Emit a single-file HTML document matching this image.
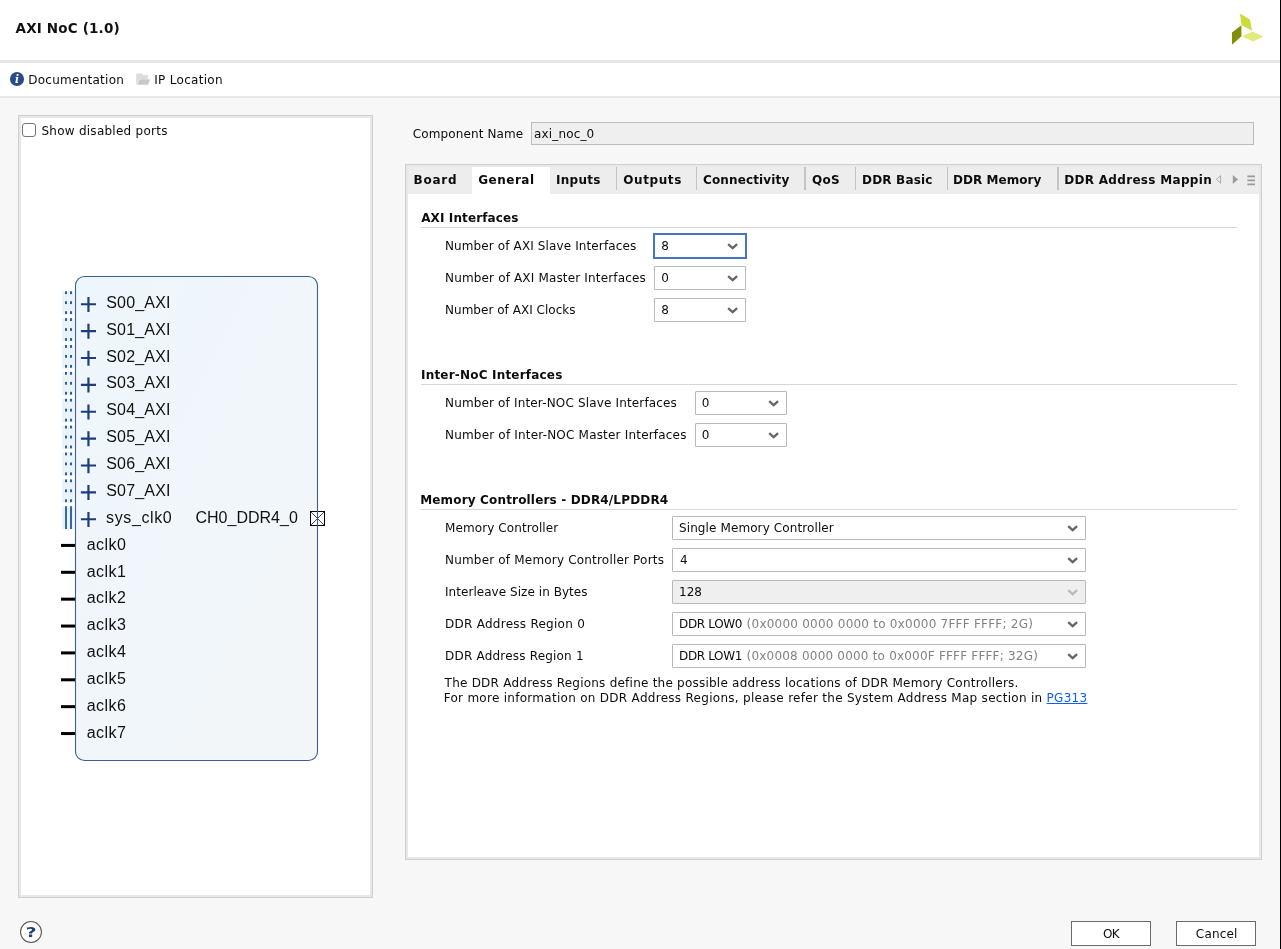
<!DOCTYPE html>
<html>
<head>
<meta charset="utf-8">
<title>AXI NoC (1.0)</title>
<style>
html,body{margin:0;padding:0;}
body{width:1281px;height:949px;position:relative;overflow:hidden;background:#f7f7f7;will-change:transform;
 font-family:"DejaVu Sans","Liberation Sans",sans-serif;font-size:12px;color:#0c0c0c;}
.abs{position:absolute;}
.t{position:absolute;white-space:nowrap;line-height:16px;}
#hdr{left:0;top:0;width:1280px;height:60px;background:#fff;}
#hline{left:0;top:60px;width:1280px;height:3px;background:#e6e6e6;}
#tool{left:0;top:63px;width:1280px;height:33px;background:#fff;}
#tline{left:0;top:96px;width:1280px;height:2px;background:#e8e8e8;}
#redge{left:1280px;top:0;width:1px;height:949px;background:#000;}
#title{color:#111;}
.panel{position:absolute;background:#fff;border:2px solid #e8e8e8;outline:1px solid #cfcfcf;}
#lpanel{left:19px;top:116px;width:349px;height:777px;}
#cb{left:22px;top:123px;width:12px;height:12px;border:1px solid #757575;border-radius:3px;background:#fff;}
.combo{position:absolute;height:22px;border:1px solid #b9b9b9;background:#fff;box-sizing:content-box;border-radius:1px;}
.combo.dis{background:#efefef;}
.combo svg{position:absolute;right:6.5px;top:7.6px;}
.gr{color:#8a8a8a;}
.lnk{color:#0b5fff;text-decoration:underline;text-decoration-thickness:1px;text-underline-offset:1.2px;}
.secline{position:absolute;height:1px;background:#d6d6d6;left:421px;width:816px;}
#rpanel{left:406px;top:165px;width:851px;height:690px;}
#tabbar{left:408px;top:167px;width:851px;height:27px;background:#ededed;}
#tabsel{left:472px;top:167px;width:78px;height:27px;background:#fff;}
.tsep{position:absolute;top:167px;width:1px;height:23px;background:#c4c4c4;}
.btn{position:absolute;height:23px;border:1px solid #6a6a6a;background:#fff;}
.bd{font-family:"Liberation Sans",sans-serif;font-size:16px;fill:#111;}
</style>
</head>
<body>
<div id="hdr" class="abs"></div>
<div id="hline" class="abs"></div>
<div id="tool" class="abs"></div>
<div id="tline" class="abs"></div>
<div id="redge" class="abs"></div>

<!-- logo -->
<svg class="abs" style="left:1228px;top:10px" width="40" height="40" viewBox="1228 10 40 40">
 <polygon points="1239.9,13.5 1250,19.6 1252.1,30.8 1241.5,24.9" fill="#cddc39"/>
 <polygon points="1232,32.5 1241.4,25.3 1241.4,36.3 1232,44.7" fill="#838b07"/>
 <polygon points="1242,36.3 1252.5,31.6 1263.5,36.4 1253,41.5" fill="#e2ea7c"/>
</svg>

<!-- toolbar icons -->
<svg class="abs" style="left:8px;top:70px" width="18" height="18" viewBox="8 70 18 18">
 <circle cx="17" cy="78.95" r="7.05" fill="#2b4a86"/>
 <text x="16.9" y="83.1" font-family="DejaVu Serif,Liberation Serif,serif" font-size="10.5" font-weight="bold" font-style="italic" fill="#fff" text-anchor="middle">i</text>
</svg>
<svg class="abs" style="left:134px;top:71px" width="18" height="16" viewBox="134 71 18 16">
 <path d="M136.2 73.4 h5.8 l1.3 1.6 h4.6 v4 h-8.6 l-2.7 5.8 h-0.4 z" fill="#dcdcdc"/>
 <path d="M139.7 79.3 h10.4 l-2 5.5 h-10.9 z" fill="#c8c8c8"/>
</svg>

<!-- left panel -->
<div id="lpanel" class="panel"></div>
<div id="cb" class="abs"></div>

<svg id="bd" class="abs" style="left:20px;top:260px" width="350" height="520" viewBox="20 260 350 520">
 <defs>
  <linearGradient id="bg" x1="0" y1="0" x2="1" y2="1">
   <stop offset="0" stop-color="#eef6fd"/><stop offset="1" stop-color="#f3f6f8"/>
  </linearGradient>
 </defs>
 <rect x="75.5" y="276.5" width="242" height="484" rx="9" ry="9" fill="url(#bg)" stroke="#3d5c9c" stroke-width="1.1"/>
<rect x="62" y="291.15" width="12.3" height="23.6" fill="#eaf2fa"/>
<rect x="65" y="291.30" width="2" height="2.8" fill="#2e5f9c"/>
<rect x="70" y="291.30" width="2" height="2.8" fill="#2e5f9c"/>
<rect x="65" y="301.25" width="2" height="2.8" fill="#2e5f9c"/>
<rect x="70" y="301.25" width="2" height="2.8" fill="#2e5f9c"/>
<rect x="65" y="311.20" width="2" height="2.8" fill="#2e5f9c"/>
<rect x="70" y="311.20" width="2" height="2.8" fill="#2e5f9c"/>
<path d="M80.9 304.25 h15.1 M88.45 296.95 v15" stroke="#1f3d7a" stroke-width="2.2" fill="none"/>
<text id="p0" x="106.20" y="307.75" class="bd" style="letter-spacing:0.200px">S00_AXI</text>
<rect x="62" y="318.02" width="12.3" height="23.6" fill="#eaf2fa"/>
<rect x="65" y="318.18" width="2" height="2.8" fill="#2e5f9c"/>
<rect x="70" y="318.18" width="2" height="2.8" fill="#2e5f9c"/>
<rect x="65" y="328.12" width="2" height="2.8" fill="#2e5f9c"/>
<rect x="70" y="328.12" width="2" height="2.8" fill="#2e5f9c"/>
<rect x="65" y="338.07" width="2" height="2.8" fill="#2e5f9c"/>
<rect x="70" y="338.07" width="2" height="2.8" fill="#2e5f9c"/>
<path d="M80.9 331.12 h15.1 M88.45 323.82 v15" stroke="#1f3d7a" stroke-width="2.2" fill="none"/>
<text id="p1" x="106.20" y="334.62" class="bd" style="letter-spacing:0.200px">S01_AXI</text>
<rect x="62" y="344.90" width="12.3" height="23.6" fill="#eaf2fa"/>
<rect x="65" y="345.05" width="2" height="2.8" fill="#2e5f9c"/>
<rect x="70" y="345.05" width="2" height="2.8" fill="#2e5f9c"/>
<rect x="65" y="355.00" width="2" height="2.8" fill="#2e5f9c"/>
<rect x="70" y="355.00" width="2" height="2.8" fill="#2e5f9c"/>
<rect x="65" y="364.95" width="2" height="2.8" fill="#2e5f9c"/>
<rect x="70" y="364.95" width="2" height="2.8" fill="#2e5f9c"/>
<path d="M80.9 358.00 h15.1 M88.45 350.70 v15" stroke="#1f3d7a" stroke-width="2.2" fill="none"/>
<text id="p2" x="106.20" y="361.50" class="bd" style="letter-spacing:0.200px">S02_AXI</text>
<rect x="62" y="371.77" width="12.3" height="23.6" fill="#eaf2fa"/>
<rect x="65" y="371.93" width="2" height="2.8" fill="#2e5f9c"/>
<rect x="70" y="371.93" width="2" height="2.8" fill="#2e5f9c"/>
<rect x="65" y="381.88" width="2" height="2.8" fill="#2e5f9c"/>
<rect x="70" y="381.88" width="2" height="2.8" fill="#2e5f9c"/>
<rect x="65" y="391.82" width="2" height="2.8" fill="#2e5f9c"/>
<rect x="70" y="391.82" width="2" height="2.8" fill="#2e5f9c"/>
<path d="M80.9 384.88 h15.1 M88.45 377.57 v15" stroke="#1f3d7a" stroke-width="2.2" fill="none"/>
<text id="p3" x="106.20" y="388.38" class="bd" style="letter-spacing:0.200px">S03_AXI</text>
<rect x="62" y="398.65" width="12.3" height="23.6" fill="#eaf2fa"/>
<rect x="65" y="398.80" width="2" height="2.8" fill="#2e5f9c"/>
<rect x="70" y="398.80" width="2" height="2.8" fill="#2e5f9c"/>
<rect x="65" y="408.75" width="2" height="2.8" fill="#2e5f9c"/>
<rect x="70" y="408.75" width="2" height="2.8" fill="#2e5f9c"/>
<rect x="65" y="418.70" width="2" height="2.8" fill="#2e5f9c"/>
<rect x="70" y="418.70" width="2" height="2.8" fill="#2e5f9c"/>
<path d="M80.9 411.75 h15.1 M88.45 404.45 v15" stroke="#1f3d7a" stroke-width="2.2" fill="none"/>
<text id="p4" x="106.20" y="415.25" class="bd" style="letter-spacing:0.200px">S04_AXI</text>
<rect x="62" y="425.52" width="12.3" height="23.6" fill="#eaf2fa"/>
<rect x="65" y="425.68" width="2" height="2.8" fill="#2e5f9c"/>
<rect x="70" y="425.68" width="2" height="2.8" fill="#2e5f9c"/>
<rect x="65" y="435.62" width="2" height="2.8" fill="#2e5f9c"/>
<rect x="70" y="435.62" width="2" height="2.8" fill="#2e5f9c"/>
<rect x="65" y="445.57" width="2" height="2.8" fill="#2e5f9c"/>
<rect x="70" y="445.57" width="2" height="2.8" fill="#2e5f9c"/>
<path d="M80.9 438.62 h15.1 M88.45 431.32 v15" stroke="#1f3d7a" stroke-width="2.2" fill="none"/>
<text id="p5" x="106.20" y="442.12" class="bd" style="letter-spacing:0.200px">S05_AXI</text>
<rect x="62" y="452.40" width="12.3" height="23.6" fill="#eaf2fa"/>
<rect x="65" y="452.55" width="2" height="2.8" fill="#2e5f9c"/>
<rect x="70" y="452.55" width="2" height="2.8" fill="#2e5f9c"/>
<rect x="65" y="462.50" width="2" height="2.8" fill="#2e5f9c"/>
<rect x="70" y="462.50" width="2" height="2.8" fill="#2e5f9c"/>
<rect x="65" y="472.45" width="2" height="2.8" fill="#2e5f9c"/>
<rect x="70" y="472.45" width="2" height="2.8" fill="#2e5f9c"/>
<path d="M80.9 465.50 h15.1 M88.45 458.20 v15" stroke="#1f3d7a" stroke-width="2.2" fill="none"/>
<text id="p6" x="106.20" y="469.00" class="bd" style="letter-spacing:0.200px">S06_AXI</text>
<rect x="62" y="479.27" width="12.3" height="23.6" fill="#eaf2fa"/>
<rect x="65" y="479.43" width="2" height="2.8" fill="#2e5f9c"/>
<rect x="70" y="479.43" width="2" height="2.8" fill="#2e5f9c"/>
<rect x="65" y="489.38" width="2" height="2.8" fill="#2e5f9c"/>
<rect x="70" y="489.38" width="2" height="2.8" fill="#2e5f9c"/>
<rect x="65" y="499.32" width="2" height="2.8" fill="#2e5f9c"/>
<rect x="70" y="499.32" width="2" height="2.8" fill="#2e5f9c"/>
<path d="M80.9 492.38 h15.1 M88.45 485.07 v15" stroke="#1f3d7a" stroke-width="2.2" fill="none"/>
<text id="p7" x="106.20" y="495.88" class="bd" style="letter-spacing:0.200px">S07_AXI</text>
<rect x="62" y="506.15" width="12.3" height="23" fill="#eaf2fa"/>
<rect x="65" y="506.25" width="2" height="22.8" fill="#3567a5"/>
<rect x="70" y="506.25" width="2" height="22.8" fill="#3567a5"/>
<path d="M80.9 519.25 h15.1 M88.45 511.95 v15" stroke="#1f3d7a" stroke-width="2.2" fill="none"/>
<text id="p8" x="106.00" y="522.75" class="bd" style="letter-spacing:0.629px">sys_clk0</text>
<text id="ch0" x="195.40" y="522.75" class="bd" style="letter-spacing:0.022px">CH0_DDR4_0</text>
<rect x="310.5" y="511.5" width="14" height="14" fill="#fff" stroke="#000" stroke-width="1"/>
<path d="M310.5 511.5 l14 14 M324.5 511.5 l-14 14" stroke="#000" stroke-width="0.7" fill="none"/>
<path d="M317.5 511 v15" stroke="#3d5c9c" stroke-width="1.1" fill="none"/>
<rect x="61" y="543.92" width="14" height="3" fill="#000"/>
<text id="a0" x="86.80" y="549.62" class="bd" style="letter-spacing:0.425px">aclk0</text>
<rect x="61" y="570.80" width="14" height="3" fill="#000"/>
<text id="a1" x="86.80" y="576.50" class="bd" style="letter-spacing:0.425px">aclk1</text>
<rect x="61" y="597.67" width="14" height="3" fill="#000"/>
<text id="a2" x="86.80" y="603.38" class="bd" style="letter-spacing:0.425px">aclk2</text>
<rect x="61" y="624.55" width="14" height="3" fill="#000"/>
<text id="a3" x="86.80" y="630.25" class="bd" style="letter-spacing:0.425px">aclk3</text>
<rect x="61" y="651.42" width="14" height="3" fill="#000"/>
<text id="a4" x="86.80" y="657.12" class="bd" style="letter-spacing:0.425px">aclk4</text>
<rect x="61" y="678.30" width="14" height="3" fill="#000"/>
<text id="a5" x="86.80" y="684.00" class="bd" style="letter-spacing:0.425px">aclk5</text>
<rect x="61" y="705.17" width="14" height="3" fill="#000"/>
<text id="a6" x="86.80" y="710.88" class="bd" style="letter-spacing:0.425px">aclk6</text>
<rect x="61" y="732.05" width="14" height="3" fill="#000"/>
<text id="a7" x="86.80" y="737.75" class="bd" style="letter-spacing:0.425px">aclk7</text>
</svg>

<!-- right -->
<div class="abs" style="left:531px;top:122px;width:721px;height:21px;border:1px solid #bcbcbc;background:#efefef;"></div>

<div id="rpanel" class="panel"></div>
<div id="tabbar" class="abs"></div>
<div id="tabsel" class="abs"></div>
<div class="tsep" style="left:616px;"></div>
<div class="tsep" style="left:696px;"></div>
<div class="tsep" style="left:804px;width:2px;"></div>
<div class="tsep" style="left:855px;"></div>
<div class="tsep" style="left:947px;"></div>
<div class="tsep" style="left:1057px;width:2px;"></div>

<svg class="abs" style="left:1212px;top:170px" width="48" height="20" viewBox="1212 170 48 20">
 <path d="M1220.6 175.6 L1216.5 179.45 L1220.6 183.3 Z" fill="none" stroke="#a4a4a4" stroke-width="0.9"/>
 <path d="M1232.8 175 L1238.1 179.45 L1232.8 183.9 Z" fill="#9c9c9c"/>
 <path d="M1247.4 176.45 h7.6 M1247.4 180.4 h7.6 M1247.4 184.3 h7.6" stroke="#9a9a9a" stroke-width="1.7" fill="none"/>
</svg>
<div class="secline" style="top:227px;"></div>
<div class="secline" style="top:384px;"></div>
<div class="secline" style="top:509px;"></div>

<div class="combo" style="left:653px;top:233px;width:90px;border:2px solid #4674c6;border-radius:0;"><svg width="12" height="8" viewBox="0 0 12 8"><path d="M1.2 1.1 L5.65 5.1 L10.1 1.1" fill="none" stroke="#666666" stroke-width="2.3"/></svg></div>
<div class="combo" style="left:654px;top:266px;width:90px;"><svg width="12" height="8" viewBox="0 0 12 8"><path d="M1.2 1.1 L5.65 5.1 L10.1 1.1" fill="none" stroke="#666666" stroke-width="2.3"/></svg></div>
<div class="combo" style="left:654px;top:298px;width:90px;"><svg width="12" height="8" viewBox="0 0 12 8"><path d="M1.2 1.1 L5.65 5.1 L10.1 1.1" fill="none" stroke="#666666" stroke-width="2.3"/></svg></div>
<div class="combo" style="left:695px;top:391px;width:90px;"><svg width="12" height="8" viewBox="0 0 12 8"><path d="M1.2 1.1 L5.65 5.1 L10.1 1.1" fill="none" stroke="#666666" stroke-width="2.3"/></svg></div>
<div class="combo" style="left:695px;top:423px;width:90px;"><svg width="12" height="8" viewBox="0 0 12 8"><path d="M1.2 1.1 L5.65 5.1 L10.1 1.1" fill="none" stroke="#666666" stroke-width="2.3"/></svg></div>
<div class="combo" style="left:672px;top:516px;width:412px;"><svg width="12" height="8" viewBox="0 0 12 8"><path d="M1.2 1.1 L5.65 5.1 L10.1 1.1" fill="none" stroke="#666666" stroke-width="2.3"/></svg></div>
<div class="combo" style="left:672px;top:548px;width:412px;"><svg width="12" height="8" viewBox="0 0 12 8"><path d="M1.2 1.1 L5.65 5.1 L10.1 1.1" fill="none" stroke="#666666" stroke-width="2.3"/></svg></div>
<div class="combo dis" style="left:672px;top:580px;width:412px;"><svg width="12" height="8" viewBox="0 0 12 8"><path d="M1.2 1.1 L5.65 5.1 L10.1 1.1" fill="none" stroke="#b9b9b9" stroke-width="2.3"/></svg></div>
<div class="combo" style="left:672px;top:612px;width:412px;"><svg width="12" height="8" viewBox="0 0 12 8"><path d="M1.2 1.1 L5.65 5.1 L10.1 1.1" fill="none" stroke="#666666" stroke-width="2.3"/></svg></div>
<div class="combo" style="left:672px;top:644px;width:412px;"><svg width="12" height="8" viewBox="0 0 12 8"><path d="M1.2 1.1 L5.65 5.1 L10.1 1.1" fill="none" stroke="#666666" stroke-width="2.3"/></svg></div>

<!-- bottom -->
<svg class="abs" style="left:19px;top:920px" width="24" height="24" viewBox="19 920 24 24">
 <circle cx="31" cy="932" r="10.45" fill="#fff" stroke="#555" stroke-width="1.05"/>
 <text x="31.1" y="937" transform="translate(31.1 0) scale(1.38 1) translate(-31.1 0)" font-family="DejaVu Sans,sans-serif" font-size="13.5" font-weight="bold" fill="#1f3d7a" text-anchor="middle">?</text>
</svg>
<div class="btn" style="left:1071px;top:921px;width:78px;"></div>
<div class="btn" style="left:1176px;top:921px;width:78px;"></div>

<div class="t" id="title" style="left:15.60px;top:18.33px;font-size:13.5px;line-height:20px;font-weight:bold;letter-spacing:0.167px;">AXI NoC (1.0)</div>
<div class="t" id="doc" style="left:28.20px;top:71.85px;letter-spacing:0.267px;">Documentation</div>
<div class="t" id="iploc" style="left:154.20px;top:71.85px;letter-spacing:0.310px;">IP Location</div>
<div class="t" id="sdp" style="left:41.40px;top:122.85px;letter-spacing:0.261px;">Show disabled ports</div>
<div class="t" id="cn" style="left:412.80px;top:125.85px;letter-spacing:0.115px;">Component Name</div>
<div class="t" id="cnv" style="left:534.00px;top:125.85px;letter-spacing:0.156px;">axi_noc_0</div>
<div class="t" id="s1" style="left:421.20px;top:209.85px;font-weight:bold;letter-spacing:0.123px;">AXI Interfaces</div>
<div class="t" id="l1" style="left:445.00px;top:237.85px;letter-spacing:0.117px;">Number of AXI Slave Interfaces</div>
<div class="t" id="l2" style="left:445.00px;top:269.85px;letter-spacing:0.160px;">Number of AXI Master Interfaces</div>
<div class="t" id="l3" style="left:445.00px;top:301.85px;letter-spacing:0.026px;">Number of AXI Clocks</div>
<div class="t" id="s2" style="left:421.00px;top:366.85px;font-weight:bold;letter-spacing:0.195px;">Inter-NoC Interfaces</div>
<div class="t" id="l4" style="left:445.00px;top:394.85px;letter-spacing:0.157px;">Number of Inter-NOC Slave Interfaces</div>
<div class="t" id="l5" style="left:445.00px;top:426.85px;letter-spacing:0.192px;">Number of Inter-NOC Master Interfaces</div>
<div class="t" id="s3" style="left:420.20px;top:491.85px;font-weight:bold;letter-spacing:0.165px;">Memory Controllers - DDR4/LPDDR4</div>
<div class="t" id="l6" style="left:445.00px;top:519.85px;letter-spacing:0.094px;">Memory Controller</div>
<div class="t" id="l7" style="left:445.00px;top:551.85px;letter-spacing:0.188px;">Number of Memory Controller Ports</div>
<div class="t" id="l8" style="left:445.00px;top:583.85px;letter-spacing:0.048px;">Interleave Size in Bytes</div>
<div class="t" id="l9" style="left:445.00px;top:615.85px;letter-spacing:0.263px;">DDR Address Region 0</div>
<div class="t" id="l10" style="left:445.00px;top:647.85px;letter-spacing:0.200px;">DDR Address Region 1</div>
<div class="t" id="n1" style="left:444.60px;top:674.85px;letter-spacing:0.231px;">The DDR Address Regions define the possible address locations of DDR Memory Controllers.</div>
<div class="t" id="n2" style="left:443.70px;top:689.85px;letter-spacing:0.285px;">For more information on DDR Address Regions, please refer the System Address Map section in <span class="lnk">PG313</span></div>
<div class="t" id="v1" style="left:661.20px;top:237.85px;">8</div>
<div class="t" id="v2" style="left:661.20px;top:269.85px;">0</div>
<div class="t" id="v3" style="left:661.20px;top:301.85px;">8</div>
<div class="t" id="v4" style="left:701.80px;top:394.85px;">0</div>
<div class="t" id="v5" style="left:701.80px;top:426.85px;">0</div>
<div class="t" id="v6" style="left:679.00px;top:519.85px;letter-spacing:0.104px;">Single Memory Controller</div>
<div class="t" id="v7" style="left:680.00px;top:551.85px;">4</div>
<div class="t" id="v8" style="left:679.00px;top:583.85px;">128</div>
<div class="t" id="v9" style="left:679.00px;top:615.85px;letter-spacing:-0.343px;">DDR LOW0</div>
<div class="t" id="v9b" style="left:746.60px;top:615.85px;letter-spacing:0.234px;color:#828282;">(0x0000 0000 0000 to 0x0000 7FFF FFFF; 2G)</div>
<div class="t" id="v10" style="left:679.00px;top:647.85px;letter-spacing:-0.357px;">DDR LOW1</div>
<div class="t" id="v10b" style="left:746.60px;top:647.85px;letter-spacing:0.200px;color:#828282;">(0x0008 0000 0000 to 0x000F FFFF FFFF; 32G)</div>
<div class="t" id="tb1" style="left:413.60px;top:171.85px;font-weight:bold;letter-spacing:0.725px;">Board</div>
<div class="t" id="tb2" style="left:478.20px;top:171.85px;font-weight:bold;letter-spacing:0.517px;">General</div>
<div class="t" id="tb3" style="left:556.00px;top:171.85px;font-weight:bold;letter-spacing:0.280px;">Inputs</div>
<div class="t" id="tb4" style="left:623.20px;top:171.85px;font-weight:bold;letter-spacing:0.600px;">Outputs</div>
<div class="t" id="tb5" style="left:703.00px;top:171.85px;font-weight:bold;letter-spacing:0.136px;">Connectivity</div>
<div class="t" id="tb6" style="left:812.00px;top:171.85px;font-weight:bold;letter-spacing:0.250px;">QoS</div>
<div class="t" id="tb7" style="left:862.00px;top:171.85px;font-weight:bold;letter-spacing:0.188px;">DDR Basic</div>
<div class="t" id="tb8" style="left:953.00px;top:171.85px;font-weight:bold;letter-spacing:0.056px;">DDR Memory</div>
<div class="t" id="tb9" style="left:1064.20px;top:171.85px;font-weight:bold;letter-spacing:0.312px;">DDR Address Mappin</div>
<div class="t" id="ok" style="left:1102.90px;top:925.85px;letter-spacing:-0.700px;">OK</div>
<div class="t" id="cancel" style="left:1195.80px;top:925.85px;letter-spacing:0.200px;">Cancel</div>
</body>
</html>
